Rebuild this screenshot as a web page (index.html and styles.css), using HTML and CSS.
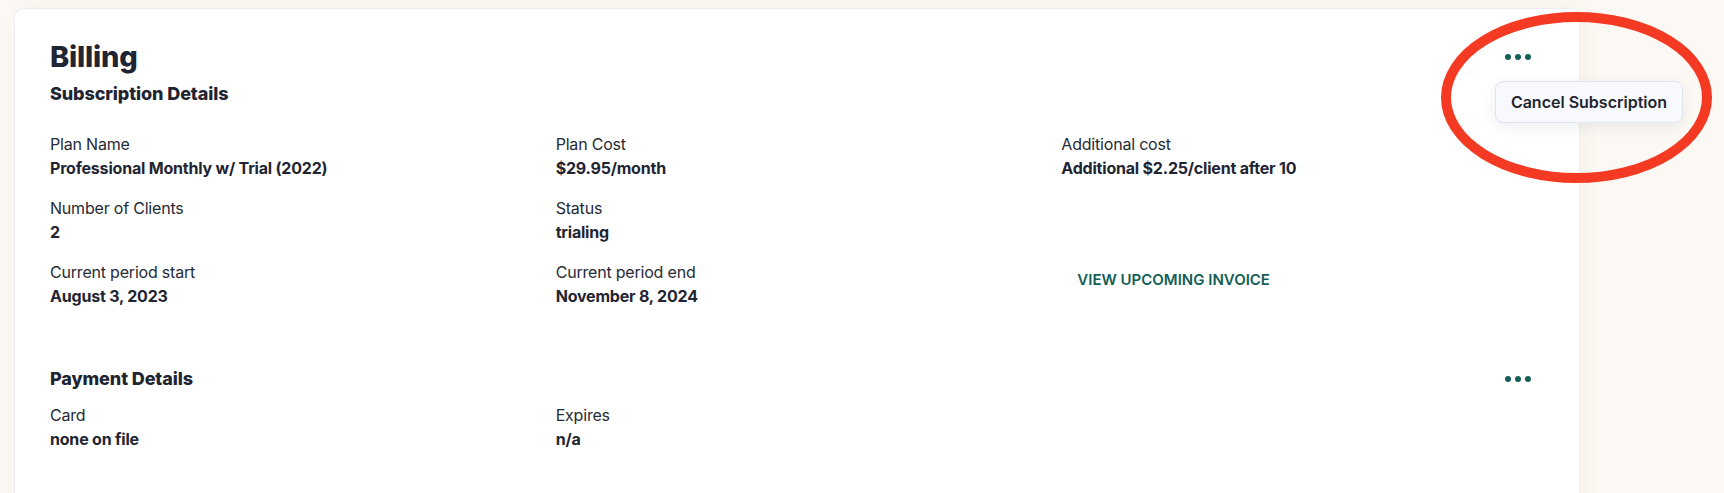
FILE: index.html
```html
<!DOCTYPE html>
<html lang="en">
<head>
<meta charset="utf-8">
<title>Billing</title>
<link rel="stylesheet" href="styles.css">
</head>
<body>
<div class="page">
  <div class="card">
    <div class="card-header">
      <h1 class="title">Billing</h1>
      <button class="dots" aria-label="More"><span></span><span></span><span></span></button>
      <div class="menu">
        <div class="menu-item">Cancel Subscription</div>
      </div>
    </div>
    <h2 class="section-title">Subscription Details</h2>
    <div class="grid grid-sub">
      <div class="item"><div class="label">Plan Name</div><div class="value">Professional Monthly w/ Trial (2022)</div></div>
      <div class="item"><div class="label">Plan Cost</div><div class="value">$29.95/month</div></div>
      <div class="item"><div class="label">Additional cost</div><div class="value">Additional $2.25/client after 10</div></div>
      <div class="item"><div class="label">Number of Clients</div><div class="value">2</div></div>
      <div class="item"><div class="label">Status</div><div class="value">trialing</div></div>
      <div class="item"></div>
      <div class="item"><div class="label">Current period start</div><div class="value">August 3, 2023</div></div>
      <div class="item"><div class="label">Current period end</div><div class="value">November 8, 2024</div></div>
      <div class="item"><button class="link-btn">VIEW UPCOMING INVOICE</button></div>
    </div>
    <div class="section-header">
      <h2 class="section-title">Payment Details</h2>
      <button class="dots" aria-label="More"><span></span><span></span><span></span></button>
    </div>
    <div class="grid grid-pay">
      <div class="item"><div class="label">Card</div><div class="value">none on file</div></div>
      <div class="item"><div class="label">Expires</div><div class="value">n/a</div></div>
    </div>
  </div>
  <svg class="annotation" width="271" height="171" viewBox="0 0 271 171" aria-hidden="true">
    <ellipse cx="135.5" cy="85.5" rx="130.5" ry="80.5" fill="none" stroke="#f43a22" stroke-width="10"/>
  </svg>
</div>
</body>
</html>
```

FILE: styles.css
```css
* { box-sizing: border-box; }

html, body {
  margin: 0;
  padding: 0;
  background: #fcf9f4;
  font-family: "Inter", "Noto Sans", sans-serif;
  color: #1f2532;
}

.page {
  position: relative;
  padding: 8px 0 0 14px;
  width: 1724px;
  height: 493px;
  overflow: hidden;
}

.card {
  width: 1566px;
  background: #ffffff;
  border: 1px solid #eceef4;
  border-radius: 10px;
  padding: 30px 36px 80px 35px;
  box-shadow: 4px 0 18px rgba(120, 100, 70, 0.06);
}

.card-header {
  position: relative;
  display: flex;
  align-items: center;
  justify-content: space-between;
}

.title {
  margin: 0;
  font-size: 29px;
  line-height: 36px;
  font-weight: 800;
  letter-spacing: -0.2px;
}

.dots {
  display: flex;
  gap: 3.5px;
  align-items: center;
  background: none;
  border: 0;
  padding: 4px 0;
  margin-right: 12px;
  cursor: pointer;
}

.dots span {
  width: 6.5px;
  height: 6.5px;
  border-radius: 50%;
  background: #155e59;
}

.menu {
  position: absolute;
  top: 42px;
  right: -140px;
  background: #f8f9fc;
  border: 1px solid #e2e5ee;
  border-radius: 8px;
  box-shadow: 0 4px 14px rgba(30, 40, 60, 0.08);
  padding: 8px 15px;
}

.menu-item {
  font-size: 16px;
  line-height: 24px;
  font-weight: 600;
  white-space: nowrap;
}

.section-title {
  margin: 7px 0 0;
  font-size: 18px;
  line-height: 24px;
  font-weight: 800;
  letter-spacing: -0.1px;
}

.grid {
  display: grid;
  grid-template-columns: repeat(3, 1fr);
  column-gap: 24px;
  row-gap: 16px;
}

.grid-sub { margin-top: 26px; }

.grid-pay { margin-top: 12px; }

.label {
  font-size: 16px;
  line-height: 24px;
  font-weight: 400;
  color: #262b36;
  letter-spacing: -0.2px;
}

.value {
  font-size: 16px;
  line-height: 24px;
  font-weight: 700;
  letter-spacing: -0.2px;
}

.link-btn {
  background: none;
  border: 0;
  padding: 8px 16px;
  font-family: inherit;
  font-size: 15px;
  line-height: 24px;
  font-weight: 600;
  color: #145e58;
  cursor: pointer;
}

.section-header {
  margin-top: 59px;
  display: flex;
  align-items: center;
  justify-content: space-between;
}

.section-header .section-title { margin: 0; }

.annotation {
  position: absolute;
  left: 1441px;
  top: 12px;
}
```
